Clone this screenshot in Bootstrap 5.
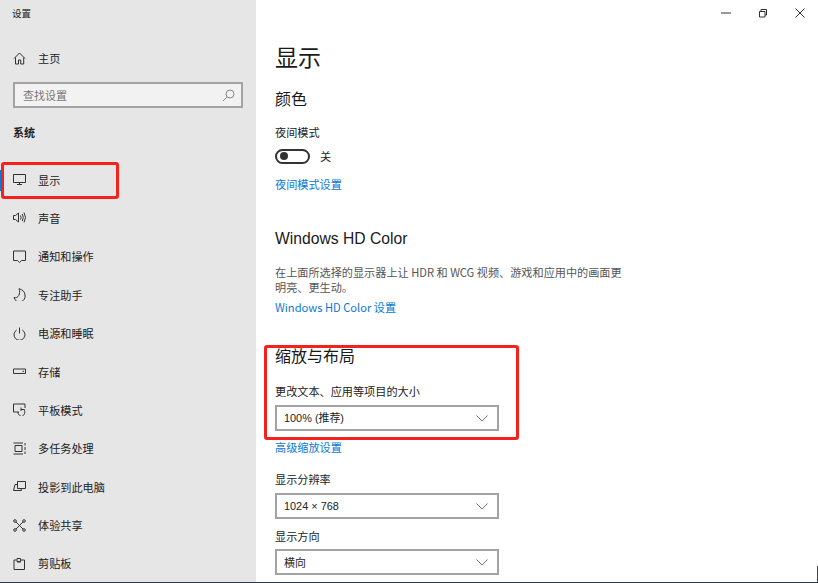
<!DOCTYPE html>
<html lang="zh"><head><meta charset="utf-8">
<link href="https://cdn.jsdelivr.net/npm/bootstrap@5.3.0/dist/css/bootstrap.min.css" rel="stylesheet">
<style>
html,body{height:583px;overflow:hidden;background:#fff}
body{font-family:"Noto Sans CJK SC","Liberation Sans",sans-serif;font-size:11.15px;color:#222;line-height:16px}
.shell{height:583px;position:relative;overflow:hidden}
.side{width:256px;background:#e6e6e6;flex:none;padding-top:5px}
.apptitle{font-size:9.5px;padding-left:12px;height:16px;line-height:16px}
.sitem{height:38.4px;padding-left:13px;gap:12px;font-size:11.15px;color:#222}
.sitem svg{width:13px;height:13px;flex:none;fill:none;stroke:#333;stroke-width:1}
.hometop{margin-top:18px}
.searchbox{margin:5px 13px 0 13px;height:26px;border:2px solid #a3a3a3;background:#f2f2f2;padding:0 6px 0 8px;color:#777;font-size:11px}
.searchbox svg{width:13px;height:13px;fill:none;stroke:#888}
.grouphd{font-weight:700;padding-left:13px;margin-top:16px;height:16px;margin-bottom:20px;font-size:11px}
.mainpane{padding:40px 0 0 19px;min-width:0}
.pagetitle{font-size:23px;line-height:32px;font-weight:400;margin:0;color:#1a1a1a}
.sect{font-size:16px;line-height:24px;font-weight:400;margin:0;color:#1a1a1a}
.sect-en{font-family:"Liberation Sans",sans-serif;font-size:15.7px}
.lnk{color:#0a78d4;text-decoration:none;display:block;font-size:11.15px}
.togrow{gap:10px;margin-top:8px;height:16px}
.tog{width:35px;height:15px;border:2px solid #333;border-radius:8px;padding-left:3px}
.tog i{display:block;width:8px;height:8px;border-radius:50%;background:#333}
.desc{width:352px;line-height:15px;font-size:11.15px;color:#555;margin:0}
.pick{width:224px;height:26px;border:2px solid #a3a3a3;background:#fff;padding:0 9px 0 7px;font-size:10.9px}
.pick svg{width:12px;height:7px;fill:none;stroke:#777}
.lat{font-family:"Liberation Sans","Noto Sans CJK SC",sans-serif}
.winbtns{position:absolute;top:5px;right:0;gap:0}
.winbtns span{width:37px;height:16px}
.winbtns svg{width:10px;height:10px;fill:none;stroke:#333}
.redbox{position:absolute;border:3px solid #f5211c;border-radius:3px}
.r1{left:1px;top:162px;width:118px;height:37px}
.r2{left:264px;top:345px;width:255px;height:95px}
.taskedge{position:absolute;left:0;right:0;bottom:0;height:1px;background:#2a3b42}
.rightedge{position:absolute;right:0;bottom:0;width:1px;height:17px;background:#444}
.activebar{position:absolute;left:0;top:170px;width:2px;height:21px;background:#0a78d4}
</style></head><body>
<div class="shell d-flex">
<aside class="side">
<div class="apptitle">设置</div>
<div class="sitem d-flex align-items-center hometop"><svg viewBox="0 0 13 13"><path d="M1 6.500 6.500 1 12 6.500M2.500 5.500V12h3V8h2.200v4h3V5.500"/></svg><span>主页</span></div>
<div class="searchbox d-flex align-items-center justify-content-between"><span>查找设置</span><svg viewBox="0 0 13 13"><circle cx="8" cy="5" r="4"/><path d="M5 8 1 12"/></svg></div>
<div class="grouphd">系统</div>
<div class="sitem d-flex align-items-center"><svg viewBox="0 0 13 13"><path d="M.5 1.500h12v8H.5zM4 11.500h5M6.500 9.500v2"/></svg><span>显示</span></div>
<div class="sitem d-flex align-items-center"><svg viewBox="0 0 13 13"><path d="M.5 4.500h2l3-2.500v9l-3-2.500h-2zM7.500 4.500q1.200 2 0 4M9.300 3q2 3.500 0 7M11 1.500q3 5 0 10"/></svg><span>声音</span></div>
<div class="sitem d-flex align-items-center"><svg viewBox="0 0 13 13"><path d="M.5 1h12v9.500H8.500L6.500 12.500 4.500 10.500h-4z"/></svg><span>通知和操作</span></div>
<div class="sitem d-flex align-items-center"><svg viewBox="0 0 13 13"><path d="M6 .7c3.500 1 6 3 6 6.300a5.500 5.500 0 0 1-11 2.500c4 1.500 7-4 5-8.800z"/></svg><span>专注助手</span></div>
<div class="sitem d-flex align-items-center"><svg viewBox="0 0 13 13"><path d="M3.700 3a5.500 5.500 0 1 0 5.600 0M6.500 .5v6"/></svg><span>电源和睡眠</span></div>
<div class="sitem d-flex align-items-center"><svg viewBox="0 0 13 13"><path d="M.5 4h12v4.500H.5zM9.500 6.300h1.500"/></svg><span>存储</span></div>
<div class="sitem d-flex align-items-center"><svg viewBox="0 0 13 13"><path d="M6 9H.5V1h11.500v4M7.500 12.500c-2 0-2.500-2-2.500-3.500M8 8V4.500M8 6.500h3.500c.5 2 .5 6-2 6"/></svg><span>平板模式</span></div>
<div class="sitem d-flex align-items-center"><svg viewBox="0 0 13 13"><path d="M.5 1h9.500M.5 12h9.500M2 3.500h7v6H2zM12 1v2.500M12 5v3M12 9.500V12"/></svg><span>多任务处理</span></div>
<div class="sitem d-flex align-items-center"><svg viewBox="0 0 13 13"><path d="M4.500 1.500h8v7h-8zM4.500 4.500H2L.5 10.500h8l-.5-2"/></svg><span>投影到此电脑</span></div>
<div class="sitem d-flex align-items-center"><svg viewBox="0 0 13 13"><circle cx="2" cy="2" r="1.300"/><circle cx="11" cy="2" r="1.300"/><circle cx="2" cy="11" r="1.300"/><circle cx="11" cy="11" r="1.300"/><path d="M3 3l7 7M10 3l-7 7"/></svg><span>体验共享</span></div>
<div class="sitem d-flex align-items-center"><svg viewBox="0 0 13 13"><path d="M1 3h2.500M8 3h3.500v9.500H1V3M4 4.500V1.500h3.500v3zM4 5h4"/></svg><span>剪贴板</span></div>
</aside>
<main class="mainpane flex-grow-1">
<h1 class="pagetitle">显示</h1>
<h2 class="sect" style="margin-top:14px">颜色</h2>
<div style="height:14px"></div>
<div>夜间模式</div>
<div class="d-flex align-items-center togrow"><span class="tog d-flex align-items-center"><i></i></span><span>关</span></div>
<a class="lnk" href="#" style="margin-top:12px">夜间模式设置</a>
<h2 class="sect sect-en" style="margin-top:35px">Windows HD Color</h2>
<p class="desc" style="margin-top:14px">在上面所选择的显示器上让 HDR 和 WCG 视频、游戏和应用中的画面更明亮、更生动。</p>
<a class="lnk" href="#" style="margin-top:4px">Windows HD Color 设置</a>
<h2 class="sect" style="margin-top:28px">缩放与布局</h2>
<div style="margin-top:16px">更改文本、应用等项目的大小</div>
<div class="pick d-flex align-items-center justify-content-between" style="margin-top:6px"><span class="lat">100% (推荐)</span><svg viewBox="0 0 12 7"><path d="M.5 .5 6 6 11.500 .5"/></svg></div>
<a class="lnk" href="#" style="margin-top:8px">高级缩放设置</a>
<div style="margin-top:16px">显示分辨率</div>
<div class="pick d-flex align-items-center justify-content-between" style="margin-top:6px"><span class="lat">1024 × 768</span><svg viewBox="0 0 12 7"><path d="M.5 .5 6 6 11.500 .5"/></svg></div>
<div style="margin-top:9px">显示方向</div>
<div class="pick d-flex align-items-center justify-content-between" style="margin-top:5px"><span>横向</span><svg viewBox="0 0 12 7"><path d="M.5 .5 6 6 11.500 .5"/></svg></div>
</main>
<div class="winbtns d-flex">
<span class="d-flex align-items-center justify-content-center"><svg viewBox="0 0 10 10"><path d="M0 5h10"/></svg></span>
<span class="d-flex align-items-center justify-content-center"><svg viewBox="0 0 10 10"><path d="M1.500 3.500h5.500v5.500H1.500zM3 3.500V1.500h5.500V7H7"/></svg></span>
<span class="d-flex align-items-center justify-content-center"><svg viewBox="0 0 10 10"><path d="M.5 .5l9 9M9.500 .5l-9 9"/></svg></span>
</div>
<div class="activebar"></div>
<div class="redbox r1"></div>
<div class="redbox r2"></div>
<div class="rightedge"></div>
<div class="taskedge"></div>
</div>
<script src="https://cdn.jsdelivr.net/npm/bootstrap@5.3.0/dist/js/bootstrap.bundle.min.js"></script>
</body></html>
